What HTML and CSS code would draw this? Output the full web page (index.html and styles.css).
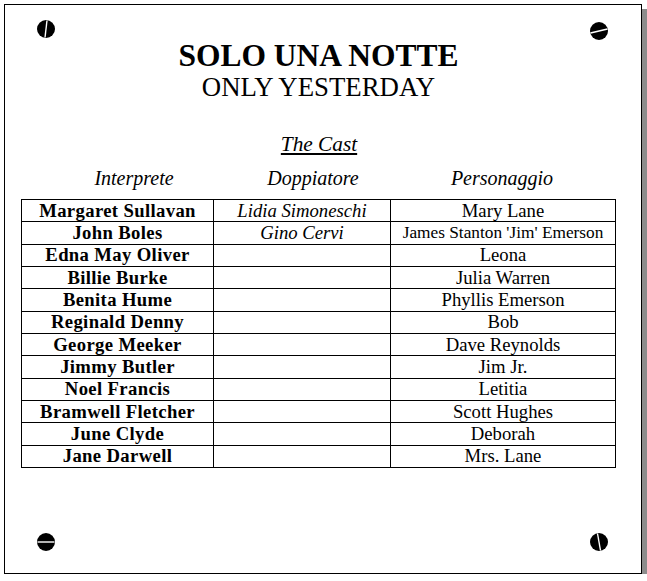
FILE: index.html
```html
<!DOCTYPE html>
<html lang="it">
<head>
<meta charset="utf-8">
<title>Solo una notte</title>
<link rel="stylesheet" href="styles.css">
</head>
<body>
<div class="plaque">
  <svg class="screw screw-tl" viewBox="0 0 18 18"><circle cx="9" cy="9" r="9"/><line x1="10" y1="0.5" x2="8" y2="17.5"/></svg>
  <svg class="screw screw-tr" viewBox="0 0 18 18"><circle cx="9" cy="9" r="9"/><line x1="0.5" y1="11" x2="17.5" y2="7"/></svg>
  <svg class="screw screw-bl" viewBox="0 0 18 18"><circle cx="9" cy="9" r="9"/><line x1="0.5" y1="9" x2="17.5" y2="9"/></svg>
  <svg class="screw screw-br" viewBox="0 0 18 18"><circle cx="9" cy="9" r="9"/><line x1="7.5" y1="0.5" x2="10.5" y2="17.5"/></svg>

  <h1 class="title">SOLO UNA NOTTE</h1>
  <h2 class="subtitle">ONLY YESTERDAY</h2>
  <div class="cast-label">The Cast</div>
  <div class="heads">
    <div class="head h1">Interprete</div>
    <div class="head h2">Doppiatore</div>
    <div class="head h3">Personaggio</div>
  </div>
  <table class="cast">
    <colgroup><col class="c1"><col class="c2"><col class="c3"></colgroup>
    <tbody>
      <tr><td class="actor">Margaret Sullavan</td><td class="dub">Lidia Simoneschi</td><td class="role">Mary Lane</td></tr>
      <tr><td class="actor">John Boles</td><td class="dub">Gino Cervi</td><td class="role small">James Stanton 'Jim' Emerson</td></tr>
      <tr><td class="actor">Edna May Oliver</td><td class="dub"></td><td class="role">Leona</td></tr>
      <tr><td class="actor">Billie Burke</td><td class="dub"></td><td class="role">Julia Warren</td></tr>
      <tr><td class="actor">Benita Hume</td><td class="dub"></td><td class="role">Phyllis Emerson</td></tr>
      <tr><td class="actor">Reginald Denny</td><td class="dub"></td><td class="role">Bob</td></tr>
      <tr><td class="actor">George Meeker</td><td class="dub"></td><td class="role">Dave Reynolds</td></tr>
      <tr><td class="actor">Jimmy Butler</td><td class="dub"></td><td class="role">Jim Jr.</td></tr>
      <tr><td class="actor">Noel Francis</td><td class="dub"></td><td class="role">Letitia</td></tr>
      <tr><td class="actor">Bramwell Fletcher</td><td class="dub"></td><td class="role">Scott Hughes</td></tr>
      <tr><td class="actor">June Clyde</td><td class="dub"></td><td class="role">Deborah</td></tr>
      <tr><td class="actor">Jane Darwell</td><td class="dub"></td><td class="role">Mrs. Lane</td></tr>
    </tbody>
  </table>
</div>
</body>
</html>
```

FILE: styles.css
```css
html, body {
  margin: 0;
  padding: 0;
  background: #ffffff;
  overflow: hidden;
}

body {
  font-family: "Liberation Serif", "Times New Roman", serif;
  color: #000;
}

.plaque {
  position: relative;
  box-sizing: border-box;
  margin: 4px 0 0 4px;
  width: 638px;
  height: 570px;
  border: 1px solid #000;
  background: #fff;
  box-shadow: 5px 5px 0 #8c8c8c;
  padding-top: 33.5px;
}

.screw {
  position: absolute;
  width: 18px;
  height: 18px;
}
.screw circle { fill: #000; }
.screw line { stroke: #fff; stroke-width: 1.4; }
.screw-tl { left: 32px; top: 15px; }
.screw-tr { left: 585px; top: 17px; }
.screw-bl { left: 32px; top: 528px; }
.screw-br { left: 585px; top: 528px; }

.title {
  margin: 0;
  font-size: 31.5px;
  line-height: 34px;
  font-weight: bold;
  text-align: center;
  padding-right: 9px;
}

.subtitle {
  margin: 0;
  font-size: 26.8px;
  line-height: 28px;
  font-weight: normal;
  text-align: center;
  padding-right: 9px;
}

.cast-label {
  margin-top: 31.3px;
  font-size: 21.3px;
  line-height: 24px;
  font-style: italic;
  text-decoration: underline;
  text-align: center;
  padding-right: 8px;
}

.heads {
  display: flex;
  margin-top: 10.6px;
  padding-left: 16px;
  font-size: 20px;
  line-height: 24px;
  font-style: italic;
}
.head { text-align: center; }
.h1 { width: 226px; }
.h2 { width: 132px; }
.h3 { width: 246px; }

.cast {
  margin: 8.6px 0 0 16px;
  width: 594px;
  border-collapse: collapse;
  table-layout: fixed;
  font-size: 18.7px;
}
.c1 { width: 192px; }
.c2 { width: 177px; }
.c3 { width: 225px; }

.cast tr { height: 22.33px; }
.cast td {
  border: 1px solid #000;
  padding: 0;
  text-align: center;
  line-height: 20px;
  white-space: nowrap;
}
.actor { font-weight: bold; letter-spacing: 0.35px; }
.dub { font-style: italic; }
.role.small { font-size: 17.3px; }
```
